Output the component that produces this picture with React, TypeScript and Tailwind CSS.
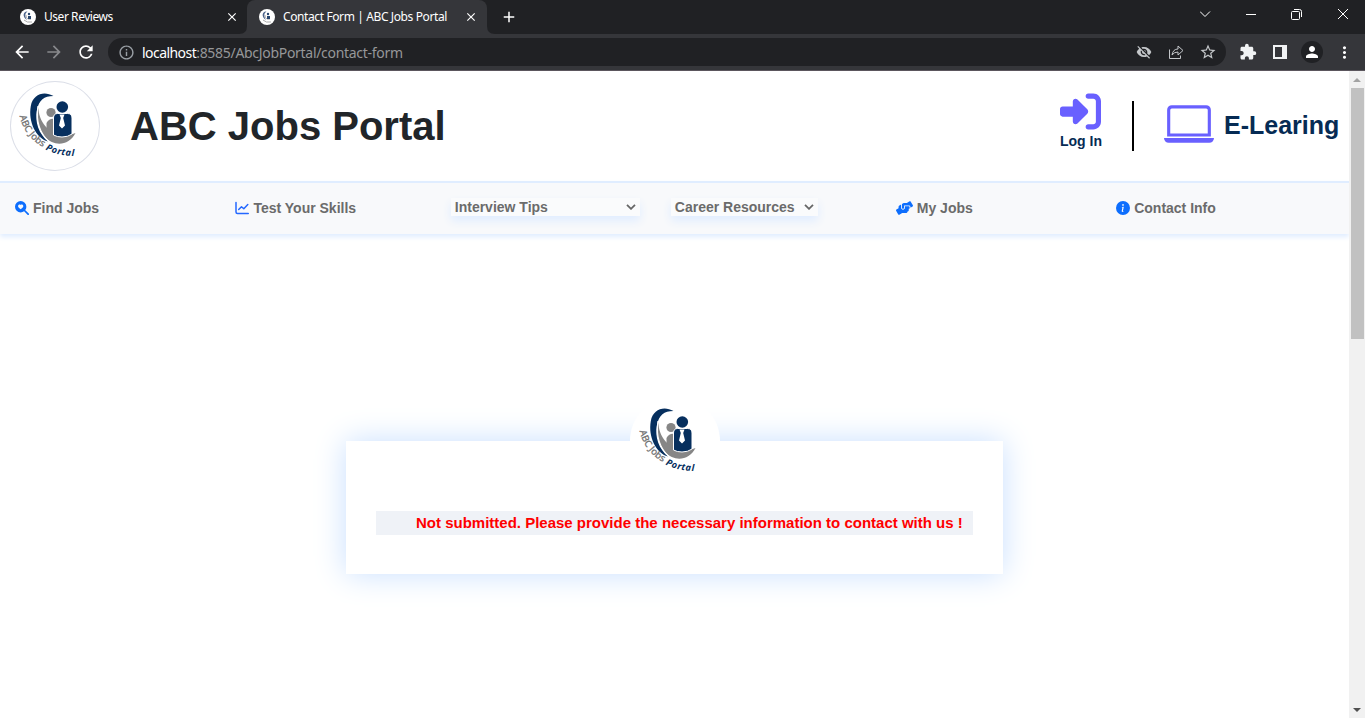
import type { ReactNode } from 'react';
import { BsSearchHeartFill, BsInfoCircleFill, BsLaptop } from 'react-icons/bs';
import { FaHandsHelping } from 'react-icons/fa';
import { FaRightToBracket } from 'react-icons/fa6';
import { MdArrowBack, MdArrowForward, MdRefresh, MdInfoOutline, MdVisibilityOff, MdStarOutline, MdExtension, MdPerson, MdMoreVert, MdClose, MdAdd } from 'react-icons/md';

function Logo({ id, className }: { id: string; className: string }) {
  return (
    <svg viewBox="0 0 90 90" className={className}>
      <g fill="#868686">
        <circle cx="41" cy="31.500" r="4.600" />
        <path d="M36.500 42q3-5 8-4v15q-5-2-8-5z" />
        <path d="M28.500 26C28 43 44 60 65.500 52C59 65 44 66 35 56C28 47 26 36 28.500 26z" />
      </g>
      <path fill="#062f5e" d="M43.500 15C34 9.500 23 13 20.800 25C18 41 26 57 38 60.500C29 53 24.500 41 27 29C29 19 34 15 43.500 15z" />
      <path fill="none" stroke="#fff" strokeWidth="1.2" d="M28 25C25.500 40 30 53 39.500 61" />
      <circle cx="52.300" cy="26" r="5.800" fill="#062f5e" />
      <path fill="#062f5e" stroke="#fff" strokeWidth="1" d="M43.500 54V37q0-4.500 4-4.500h10q4.500 0 4.500 4.500v16q-4 3-10 3-5 0-8.500-2z" />
      <path fill="#fff" d="M49.500 33.500h5l-1.300 3.500 1.800 7.500-3 3-3-3 1.800-7.500z" />
      <path id={id} d="M9.500 35Q15 60 45 72" fill="none" />
      <path id={`${id}-end`} d="M35.500 68.500Q48 75.500 68 75" fill="none" />
      <text className="font-['Noto_Sans']" fontSize="9.5" fill="#6d6d6d" stroke="#6d6d6d" strokeWidth="0.25" textLength="40">
        <textPath href={`#${id}`}>ABC Jobs</textPath>
      </text>
      <text className="font-['Noto_Sans'] font-bold italic" fontSize="9.2" fill="#062f5e" textLength="30">
        <textPath href={`#${id}-end`}>Portal</textPath>
      </text>
    </svg>
  );
}

function Favicon() {
  return (
    <svg viewBox="0 0 16 16" className="h-4 w-4 shrink-0">
      <circle cx="8" cy="8" r="8" fill="#fff" />
      <path d="M7.500 2.500C3 2 2 8 7 11C4.500 7 5 4 7.500 2.500z" fill="#4a628a" />
      <path d="M6 6q0 5 5 4M4 11q3 3 8 2" stroke="#aaa" fill="none" />
      <circle cx="9" cy="5" r="1.200" fill="#28466f" />
      <path d="M8 7h3v3H8z" fill="#28466f" />
    </svg>
  );
}

function Chrome() {
  return (
    <div className="flex h-[71px] shrink-0 flex-col bg-[#35363a] font-['Noto_Sans',sans-serif]">
      <div className="flex h-[34px] items-stretch bg-[#202124] text-white">
        <div className="flex w-[247px] items-center pl-5">
          <Favicon />
          <span className="ml-2 w-[69px] text-[12px] tracking-[-0.450px] whitespace-nowrap">User Reviews</span>
          <MdClose className="ml-[112px] h-[14px] w-[14px]" />
        </div>
        <div className="relative flex w-[240px] items-center rounded-t-lg bg-[#35363a] pl-3">
          <svg viewBox="0 0 8 8" className="absolute bottom-0 -left-2 h-2 w-2"><path d="M8 0v8H0Q8 8 8 0" fill="#35363a" /></svg>
          <svg viewBox="0 0 8 8" className="absolute -right-2 bottom-0 h-2 w-2"><path d="M0 0v8h8Q0 8 0 0" fill="#35363a" /></svg>
          <Favicon />
          <span className="ml-2 w-[165px] text-[12px] tracking-[-0.390px] whitespace-nowrap">Contact Form | ABC Jobs Portal</span>
          <MdClose className="ml-4 h-[14px] w-[14px]" />
        </div>
        <MdAdd className="mt-2 ml-[13px] h-[18px] w-[18px]" />
        <svg viewBox="0 0 165 34" className="ml-auto h-[34px] w-[165px]" fill="none" stroke="#fff">
          <path d="M0 11.500l5 5 5-5" />
          <path d="M46 14.500h10M92.500 11.500h6q1 0 1 1v6q0 1-1 1h-6q-1 0-1-1v-6q0-1 1-1zM94 9.500h5.500q2 0 2 2V17M138 9l10 10M148 9l-10 10" />
        </svg>
      </div>
      <div className="flex h-9 items-center pl-[12px]">
        <MdArrowBack className="h-5 w-5 text-white" />
        <MdArrowForward className="ml-[12px] h-5 w-5 text-[#88898c]" />
        <MdRefresh className="ml-[12px] h-5 w-5 text-white" />
        <div className="ml-3 flex h-7 w-[1118px] items-center rounded-full bg-[#202124] pr-[9px] pl-[10px]">
          <MdInfoOutline className="h-[17px] w-[17px] text-[#9aa0a6]" />
          <span className="ml-[7px] text-[14px] tracking-[-0.300px] whitespace-nowrap text-[#969799]"><span className="tracking-[-0.550px] text-white">localhost</span>:8585/AbcJobPortal/contact-form</span>
          <div className="ml-auto flex items-center gap-[15px] text-[#c4c7ca]">
            <MdVisibilityOff className="h-4 w-4" />
            <svg viewBox="0 0 16 16" className="ml-px h-4 w-4" fill="none" stroke="currentColor"><path d="M1.500 5.500v9h11v-3M4 11q1-6 6-6V2l5 4.500-5 4.500V8q-4 0-6 3z" /></svg>
            <MdStarOutline className="h-[18px] w-[18px]" />
          </div>
        </div>
        <MdExtension className="ml-[13px] h-[18px] w-[18px] text-[#f1f3f4]" />
        <svg viewBox="0 0 14 14" className="ml-[16px] h-[14px] w-[14px]"><path fill="#f1f3f4" fillRule="evenodd" d="M0 0h14v14H0zM2 2v10h7V2z" /></svg>
        <div className="ml-[14px] flex h-[22px] w-[22px] items-center justify-center rounded-full bg-[#202124]"><MdPerson className="h-[18px] w-[18px] text-white" /></div>
        <MdMoreVert className="ml-[12px] h-[19px] w-[19px] text-white" />
      </div>
      <div className="h-px bg-[#5b565d]" />
    </div>
  );
}

function NavItem({ icon, label }: { icon: ReactNode; label: string }) {
  return (
    <a className="flex w-[220.400px] shrink-0 items-center gap-1 pb-px">
      {icon}
      <span>{label}</span>
    </a>
  );
}

function Select({ label, className }: { label: string; className: string }) {
  return (
    <div className={`mb-[3px] flex h-[18px] shrink-0 items-center justify-between bg-[#fafbfc] pr-1 pl-1 shadow-[0_5px_10px_#e0edff] ${className}`}>
      <span>{label}</span>
      <svg viewBox="0 0 10 6" className="h-[6px] w-[10px]" fill="none" stroke="#666" strokeWidth="1.8"><path d="M1 0.800l4 4 4-4" /></svg>
    </div>
  );
}

export default function App() {
  return (
    <div className="flex h-[718px] w-[1365px] flex-col overflow-hidden bg-white font-['Liberation_Sans',Arial,sans-serif]">
      <Chrome />
      <div className="flex min-h-0 flex-1">
        <main className="w-[1349px]">
          <header className="flex h-[110px] items-center pl-[10px]">
            <div className="h-[90px] w-[90px] rounded-full shadow-[inset_0_0_0_1px_#dcdfe8]"><Logo id="header-logo" className="h-[90px] w-[90px]" /></div>
            <h1 className="ml-[30px] text-[40px] leading-none font-bold whitespace-nowrap text-[#212529]">ABC Jobs Portal</h1>
            <div className="ml-auto flex items-center pr-[10px] font-bold text-[#062b54]">
              <div className="flex w-[42px] flex-col items-center pb-[10px]">
                <FaRightToBracket className="mr-px h-[41px] w-[41px] text-[#6960ff]" />
                <span className="text-[14px] leading-[19px] whitespace-nowrap">Log In</span>
              </div>
              <div className="ml-[30px] h-[50px] w-[2px] bg-black" />
              <BsLaptop className="mb-1 ml-[30px] h-[50px] w-[50px] text-[#6960ff]" />
              <span className="ml-[10px] w-[115px] text-[25px] whitespace-nowrap">E-Learing</span>
            </div>
          </header>
          <nav className="flex h-[53px] items-center border-t-2 border-[#e0edff] bg-[#f8f9fb] pl-[15px] text-[14px] leading-[18px] font-bold whitespace-nowrap text-[#6b6b6b] shadow-[0_3px_5px_#e0edff]">
            <NavItem icon={<BsSearchHeartFill className="h-[14px] w-[14px] text-[#0d6efd]" />} label="Find Jobs" />
            <NavItem
              icon={
                <svg viewBox="0 0 14 14" className="h-[14px] w-[14px]" fill="none" stroke="#2468ff" strokeWidth="1.5" strokeLinejoin="round" strokeLinecap="round">
                  <path d="M1 1.500v9.500q0 1.500 1.500 1.500H13.300" />
                  <path d="M3.700 8.500L6.500 5.700l2.300 2 4-4.200" />
                </svg>
              }
              label="Test Your Skills"
            />
            <Select label="Interview Tips" className="-ml-[5px] w-[189px]" />
            <Select label="Career Resources" className="mr-[78px] ml-[31px] w-[147px]" />
            <NavItem icon={<FaHandsHelping className="h-[14px] w-[17px] text-[#0d6efd]" />} label="My Jobs" />
            <NavItem icon={<BsInfoCircleFill className="h-[14px] w-[14px] text-[#0d6efd]" />} label="Contact Info" />
          </nav>
          <section className="mt-[207px] ml-[346px] flex h-[133px] w-[657px] flex-col items-center bg-white shadow-[0_0_30px_#c8dfff]">
            <div className="-mt-[45px] h-[90px] w-[90px] shrink-0 rounded-full bg-white"><Logo id="card-logo" className="h-[90px] w-[90px]" /></div>
            <p className="mt-[25px] h-6 w-[597px] bg-[#eff2f7] pl-10 text-[15px] leading-6 font-bold whitespace-nowrap text-[#ff0000]">Not submitted. Please provide the necessary information to contact with us !</p>
          </section>
        </main>
        <aside className="flex w-4 flex-col items-center bg-[#f1f1f1]">
          <svg viewBox="0 0 16 17" className="h-[17px] w-4"><path d="M4 11l4-4 4 4z" fill="#a3a3a3" /></svg>
          <div className="h-[251px] w-[13px] bg-[#c1c1c1]" />
          <svg viewBox="0 0 16 17" className="mt-auto h-[17px] w-4"><path d="M4 7l4 4 4-4z" fill="#505050" /></svg>
        </aside>
      </div>
    </div>
  );
}
